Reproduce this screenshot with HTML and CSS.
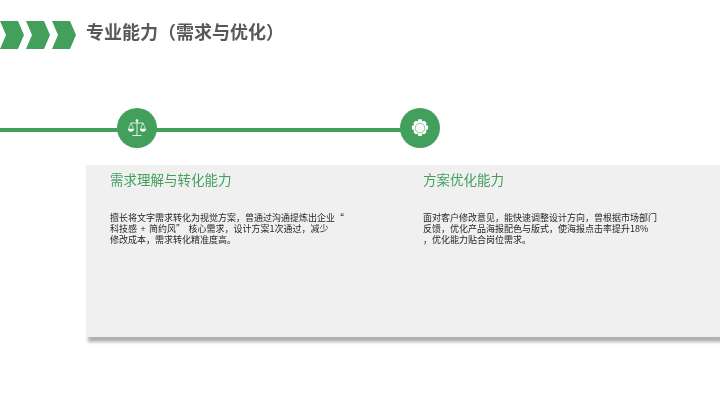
FILE: index.html
```html
<!DOCTYPE html>
<html lang="zh-CN">
<head>
<meta charset="utf-8">
<title>专业能力&#xFF08;需求与优化&#xFF09;</title>
<link rel="stylesheet" href="styles.css">
</head>
<body>
<main class="slide">
  <header class="header">
    <div class="chevrons">
      <svg class="chevron" viewBox="0 0 24 28"><polygon points="0,0 18,0 24,14 18,28 0,28 6,14"/></svg>
      <svg class="chevron" viewBox="0 0 24 28"><polygon points="0,0 18,0 24,14 18,28 0,28 6,14"/></svg>
      <svg class="chevron" viewBox="0 0 24 28"><polygon points="0,0 18,0 24,14 18,28 0,28 6,14"/></svg>
    </div>
    <h1 class="title">专业能力&#xFF08;需求与优化&#xFF09;</h1>
  </header>
  <section class="timeline">
    <div class="node node-first">
      <svg class="icon" viewBox="0 0 24 24" fill="none" stroke="#fff" stroke-width="1">
        <circle cx="12" cy="3" r="1.6" fill="#fff" stroke="none"/>
        <path d="M12 4v16.500M6.500 21h11M4.500 6h15"/>
        <path d="M4.800 6 1.800 13M4.800 6l3 7M19.200 6l-3 7M19.200 6l3 7" stroke-width=".8"/>
        <path d="M1.300 13h7a3.500 3.500 0 0 1-7 0zM15.700 13h7a3.500 3.500 0 0 1-7 0z" fill="#fff" stroke="none"/>
      </svg>
    </div>
    <div class="node node-second">
      <svg class="icon" viewBox="0 0 24 24">
        <path fill="#fff" d="M10 1.500h4l.7 2.800 2.400-1 2.800 2.800-1 2.400 2.800.7v4.600l-2.800.7 1 2.400-2.800 2.800-2.400-1-.7 2.800h-4l-.7-2.800-2.400 1-2.800-2.800 1-2.400-2.800-.7V9.200l2.800-.7-1-2.400 2.800-2.800 2.400 1z"/>
        <circle cx="12" cy="12" r="5.800" fill="#f2f8f4" stroke="#6fb585" stroke-width=".9"/>
      </svg>
    </div>
  </section>
  <section class="panel">
    <article class="item">
      <h2 class="item-title">需求理解与转化能力</h2>
      <p class="item-text">
        <span class="line">擅长将文字需求转化为视觉方案&#xFF0C;曾通过沟通提炼出企业&#x201C;</span>
        <span class="line">科技感 + 简约风&#x201D; 核心需求&#xFF0C;设计方案1次通过&#xFF0C;减少</span>
        <span class="line">修改成本&#xFF0C;需求转化精准度高。</span>
      </p>
    </article>
    <article class="item">
      <h2 class="item-title">方案优化能力</h2>
      <p class="item-text">
        <span class="line">面对客户修改意见&#xFF0C;能快速调整设计方向&#xFF0C;曾根据市场部门</span>
        <span class="line">反馈&#xFF0C;优化产品海报配色与版式&#xFF0C;使海报点击率提升18%</span>
        <span class="line">&#xFF0C;优化能力贴合岗位需求。</span>
      </p>
    </article>
  </section>
</main>
</body>
</html>
```
FILE: styles.css
```css
* { box-sizing: border-box; }
html, body { margin: 0; padding: 0; background: #fff; }
body { font-family: "Noto Sans CJK SC", "Liberation Sans", sans-serif; }
.slide { width: 720px; height: 405px; overflow: hidden; display: flex; flex-direction: column; filter: blur(.35px); }
.header { display: flex; align-items: center; height: 28px; margin-top: 21px; }
.chevrons { display: flex; gap: 2px; width: 86px; flex: none; }
.chevron { width: 24px; height: 28px; fill: #43a05c; flex: none; }
.title { margin: 0 0 8px; font-size: 18px; line-height: 24px; font-weight: 700; color: #595959; white-space: nowrap; }
.timeline { position: relative; display: flex; height: 40px; margin-top: 59px; }
.timeline::before { content: ""; position: absolute; left: 0; top: 20px; width: 420px; height: 4px; background: #43a05c; }
.node { position: relative; width: 40px; height: 40px; border-radius: 50%; background: #43a05c; display: flex; align-items: center; justify-content: center; flex: none; }
.node-first { margin-left: 117px; }
.node-second { margin-left: 243px; }
.icon { width: 20px; height: 20px; }
.panel { display: flex; margin-top: 17px; margin-left: 86px; height: 172px; background: #f0f0f0; box-shadow: 2px 5px 3px 0 #b0b0b0; }
.item { flex: none; width: 313px; padding: 4px 0 0 24px; }
.item-title { margin: 0; font-size: 13.5px; line-height: 20px; font-weight: 400; color: #43a05c; white-space: nowrap; }
.item-text { margin: 23px 0 0; font-size: 9px; line-height: 11px; color: #262626; white-space: nowrap; word-spacing: 1.5px; }
.line { display: block; }
```
